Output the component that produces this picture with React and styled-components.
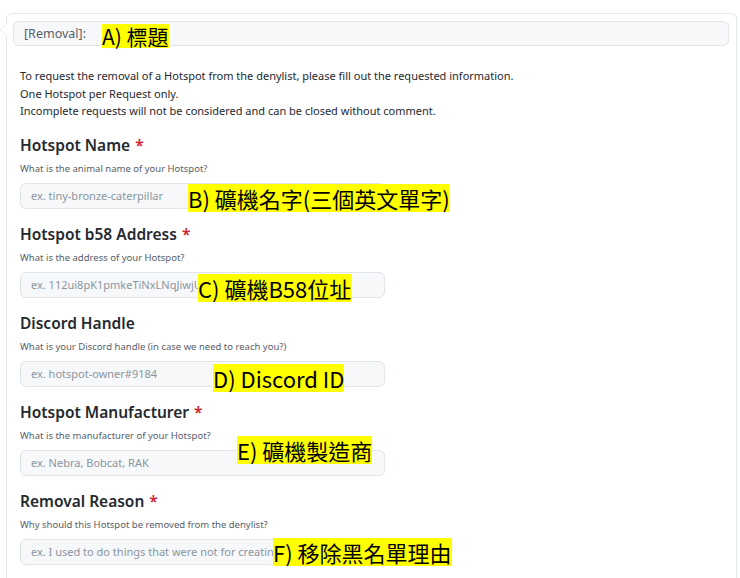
import React from "react";
import styled, { createGlobalStyle } from "styled-components";

const GlobalStyle = createGlobalStyle`
  body {
    margin: 0;
    background: #ffffff;
    font-family: "Noto Sans", "Open Sans", sans-serif;
    color: #24292f;
  }
`;

const fields = [
  {
    title: "Hotspot Name",
    required: true,
    desc: "What is the animal name of your Hotspot?",
    placeholder: "ex. tiny-bronze-caterpillar",
    note: "B) 礦機名字(三個英文單字)",
    nx: 168,
    ny: 1,
  },
  {
    title: "Hotspot b58 Address",
    required: true,
    desc: "What is the address of your Hotspot?",
    placeholder: "ex. 112ui8pK1pmkeTiNxLNqJiwjUQxvFhEYsRzKp9H2tgB2j",
    note: "C) 礦機B58位址",
    nx: 178,
    ny: 2,
  },
  {
    title: "Discord Handle",
    required: false,
    desc: "What is your Discord handle (in case we need to reach you?)",
    placeholder: "ex. hotspot-owner#9184",
    note: "D) Discord ID",
    nx: 193,
    ny: 3,
  },
  {
    title: "Hotspot Manufacturer",
    required: true,
    desc: "What is the manufacturer of your Hotspot?",
    placeholder: "ex. Nebra, Bobcat, RAK",
    note: "E) 礦機製造商",
    nx: 217,
    ny: -14,
  },
  {
    title: "Removal Reason",
    required: true,
    desc: "Why should this Hotspot be removed from the denylist?",
    placeholder: "ex. I used to do things that were not for creating a better network",
    note: "F) 移除黑名單理由",
    nx: 253,
    ny: -1,
  },
];

const App = () => {
  return (
    <Page>
      <GlobalStyle />
      <CommentBox>
        <TitleBar>
          <TitleText>[Removal]:</TitleText>
          <Note $x={88} $y={2} $size={21}>
            A) 標題
          </Note>
        </TitleBar>
        <Body>
          <Intro>
            To request the removal of a Hotspot from the denylist, please fill
            out the requested information.
            <br />
            One Hotspot per Request only.
            <br />
            Incomplete requests will not be considered and can be closed without
            comment.
          </Intro>
          {fields.map((f) => (
            <Field key={f.title}>
              <Heading>
                {f.title}
                {f.required && <Star>*</Star>}
              </Heading>
              <Desc>{f.desc}</Desc>
              <InputWrap>
                <Input readOnly placeholder={f.placeholder} />
                <Note $x={f.nx} $y={f.ny}>
                  {f.note}
                </Note>
              </InputWrap>
            </Field>
          ))}
        </Body>
      </CommentBox>
    </Page>
  );
};

export default App;

const Page = styled.div`
  padding: 13px 3px 0 6px;
  height: 565px;
  overflow: hidden;
`;

const CommentBox = styled.div`
  position: relative;
  border: 1px solid #e3e6ea;
  border-bottom: none;
  border-radius: 6px 6px 0 0;
  padding: 7px 7px 0 6px;
  min-height: 560px;

  &::before,
  &::after {
    content: "";
    position: absolute;
    top: 9px;
    width: 0;
    height: 0;
    border-style: solid;
    border-color: transparent;
  }
  &::before {
    left: -7px;
    border-width: 7px 7px 7px 0;
    border-right-color: #e3e6ea;
  }
  &::after {
    left: -6px;
    border-width: 7px 7px 7px 0;
    border-right-color: #ffffff;
  }
`;

const TitleBar = styled.div`
  position: relative;
  display: flex;
  align-items: center;
  height: 23px;
  padding-left: 10px;
  background: #f6f8fa;
  border: 1px solid #e1e4e8;
  border-radius: 6px;
`;

const TitleText = styled.span`
  font-size: 12.5px;
  color: #57606a;
`;

const Body = styled.div`
  padding: 21px 7px 0 7px;
`;

const Intro = styled.p`
  margin: 0 0 14px 0;
  font-size: 11px;
  line-height: 17.5px;
  color: #24292f;
`;

const Field = styled.div`
  margin-bottom: 14px;
`;

const Heading = styled.h3`
  margin: 0;
  font-size: 15.5px;
  line-height: 22px;
  font-weight: 600;
  color: #24292f;
`;

const Star = styled.span`
  color: #cf222e;
  margin-left: 5px;
`;

const Desc = styled.div`
  margin-top: 6px;
  font-size: 9.5px;
  line-height: 14px;
  color: #57606a;
`;

const InputWrap = styled.div`
  position: relative;
  margin-top: 7px;
  width: 365px;
`;

const Input = styled.input`
  box-sizing: border-box;
  display: block;
  width: 100%;
  height: 26px;
  padding: 0 10px;
  font-family: inherit;
  font-size: 11px;
  background: #f6f8fa;
  border: 1px solid #e1e4e8;
  border-radius: 6px;
  outline: none;

  &::placeholder {
    color: #8c959f;
  }
`;

const Note = styled.span`
  position: absolute;
  left: ${(p) => p.$x}px;
  top: ${(p) => p.$y}px;
  background: #ffff00;
  color: #000000;
  font-family: "Noto Sans CJK TC", "Noto Sans", sans-serif;
  font-size: ${(p) => p.$size || 22}px;
  line-height: ${(p) => (p.$size ? 24 : 28)}px;
  white-space: nowrap;
`;
